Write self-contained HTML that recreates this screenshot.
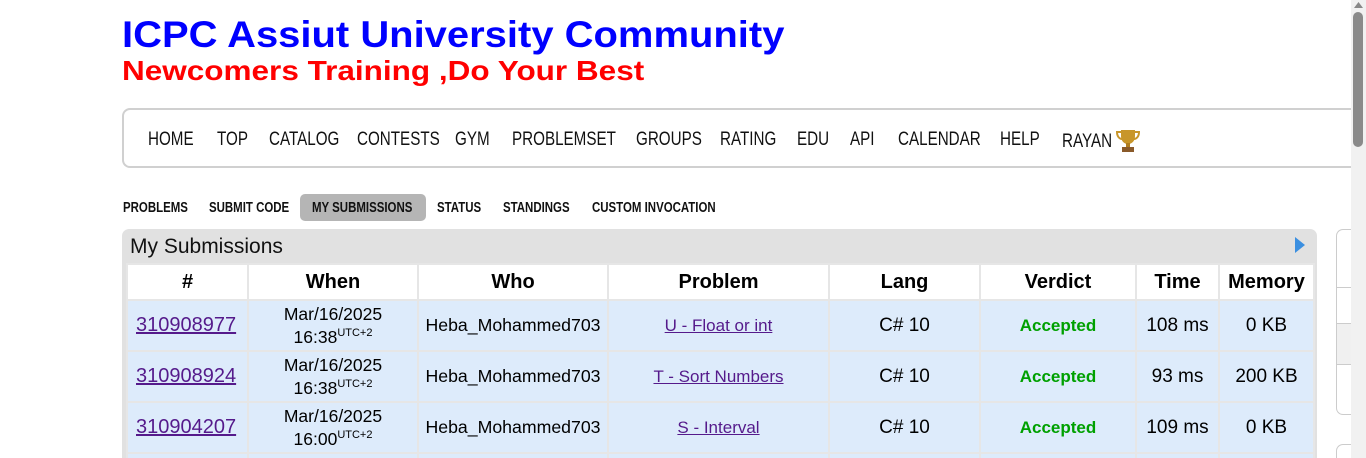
<!DOCTYPE html>
<html><head><meta charset="utf-8"><style>
*{margin:0;padding:0;box-sizing:border-box}
html,body{width:1366px;height:458px;overflow:hidden}
body{background:#fff;font-family:"Liberation Sans",Verdana,sans-serif;position:relative}
.t1{position:absolute;left:122px;top:14px;font-size:37px;font-weight:bold;color:#0000ff;transform:scaleX(1.08);transform-origin:0 0;white-space:nowrap}
.t2{position:absolute;left:122px;top:55px;font-size:28px;font-weight:bold;color:#ff0000;transform:scaleX(1.125);transform-origin:0 0;white-space:nowrap}
.nav{position:absolute;left:122px;top:108px;width:1250px;height:60px;border:2px solid #d0d0d0;border-radius:8px;border-right:none}
.nav span{position:absolute;top:19px;font-size:19px;color:#111;transform:scaleX(0.8);transform-origin:0 0;white-space:nowrap}
.tabs span{position:absolute;top:200px;font-weight:bold;font-size:14.5px;color:#111;transform:scaleX(0.79);transform-origin:0 0;white-space:nowrap}
.sel{position:absolute;left:300px;top:194px;width:126px;height:27px;background:#b5b5b5;border-radius:5px}
.box{position:absolute;left:122px;top:229px;width:1195px;height:229px;background:#e1e1e1;border-radius:7px 7px 0 0;overflow:hidden}
.box h3{position:absolute;left:8px;top:6px;font-weight:normal;font-size:21px;color:#111}
.tw{position:absolute;left:126px;top:263px;width:1190px;height:195px;overflow:hidden}
table{border-collapse:collapse;table-layout:fixed}
td,th{border:2px solid #e6e6e6;text-align:center;font-size:19px;color:#000;white-space:nowrap}
th{background:#fff;height:36px;font-weight:bold;font-size:20px}
td{background:#ddebfb;height:51px}
a{color:#551a8b;text-decoration:underline}
.id{font-size:20px;text-align:left;padding-left:8px}
.wh{font-size:17.5px;line-height:19px}
.who{font-size:17.7px}
sup{font-size:11px}
.pr{font-size:17px}
.ac{color:#00a000;font-weight:bold;font-size:17px}
.sb{position:absolute;left:1351px;top:0;width:15px;height:458px;background:#f1f1f1}
.th{position:absolute;left:1353px;top:12px;width:10px;height:135px;background:#8a8a8a;border-radius:5px}
.side{position:absolute;left:1336px;top:229px;width:20px;height:186px;border:1px solid #ccc;border-radius:7px 0 0 7px;border-right:none}
</style></head><body>
<div class="t1">ICPC Assiut University Community</div>
<div class="t2">Newcomers Training ,Do Your Best</div>
<div class="nav">
<span style="left:24px">HOME</span><span style="left:93px">TOP</span><span style="left:145px">CATALOG</span><span style="left:233px">CONTESTS</span><span style="left:331px">GYM</span><span style="left:388px">PROBLEMSET</span><span style="left:512px">GROUPS</span><span style="left:596px">RATING</span><span style="left:673px">EDU</span><span style="left:726px">API</span><span style="left:774px">CALENDAR</span><span style="left:876px">HELP</span><span style="left:938px;top:21px">RAYAN</span>
<svg style="position:absolute;left:992px;top:18px" width="24" height="26" viewBox="0 0 24 26"><path d="M5 2h14v6c0 5-3 8-7 8s-7-3-7-8z" fill="#c8962a"/><path d="M5 4H1c0 5 3 7 5 7M19 4h4c0 5-3 7-5 7" stroke="#c8962a" stroke-width="2" fill="none"/><rect x="10" y="15" width="4" height="4" fill="#b07d20"/><rect x="6" y="19" width="12" height="5" fill="#8a5a2a"/></svg>
</div>
<div class="sel"></div>
<div class="tabs"><span style="left:123px">PROBLEMS</span><span style="left:209px">SUBMIT CODE</span><span style="left:312px">MY SUBMISSIONS</span><span style="left:437px">STATUS</span><span style="left:503px">STANDINGS</span><span style="left:592px">CUSTOM INVOCATION</span></div>
<div class="box"><h3>My Submissions</h3>
<svg style="position:absolute;left:1173px;top:8px" width="10" height="16"><path d="M0 0L10 8L0 16Z" fill="#3b8fe0"/></svg></div>
<div class="tw"><table>
<colgroup><col style="width:121px"><col style="width:170px"><col style="width:190px"><col style="width:221px"><col style="width:151px"><col style="width:156px"><col style="width:83px"><col style="width:95px"></colgroup>
<tr><th>#</th><th>When</th><th>Who</th><th>Problem</th><th>Lang</th><th>Verdict</th><th>Time</th><th>Memory</th></tr>
<tr><td class="id"><a>310908977</a></td><td class="wh">Mar/16/2025<br>16:38<sup>UTC+2</sup></td><td class="who">Heba_Mohammed703</td><td class="pr"><a>U - Float or int</a></td><td>C# 10</td><td class="ac">Accepted</td><td>108 ms</td><td>0 KB</td></tr>
<tr><td class="id"><a>310908924</a></td><td class="wh">Mar/16/2025<br>16:38<sup>UTC+2</sup></td><td class="who">Heba_Mohammed703</td><td class="pr"><a>T - Sort Numbers</a></td><td>C# 10</td><td class="ac">Accepted</td><td>93 ms</td><td>200 KB</td></tr>
<tr><td class="id"><a>310904207</a></td><td class="wh">Mar/16/2025<br>16:00<sup>UTC+2</sup></td><td class="who">Heba_Mohammed703</td><td class="pr"><a>S - Interval</a></td><td>C# 10</td><td class="ac">Accepted</td><td>109 ms</td><td>0 KB</td></tr>
<tr><td class="id"></td><td></td><td></td><td></td><td></td><td></td><td></td><td></td></tr>
</table></div>
<div class="side"><div style="position:absolute;top:57px;left:0;width:20px;border-top:1px solid #ccc"></div><div style="position:absolute;top:93px;left:0;width:20px;height:42px;background:#f0f0f0;border-top:1px solid #ccc;border-bottom:1px solid #ccc"></div></div>
<div style="position:absolute;left:1336px;top:444px;width:20px;height:14px;border:1px solid #ccc;border-radius:7px 0 0 0;border-right:none;border-bottom:none"></div>
<div class="sb"></div><div class="th"></div>
<svg style="position:absolute;left:1354px;top:2px" width="9" height="6"><path d="M0 6L4.5 0L9 6Z" fill="#888"/></svg>
</body></html>
